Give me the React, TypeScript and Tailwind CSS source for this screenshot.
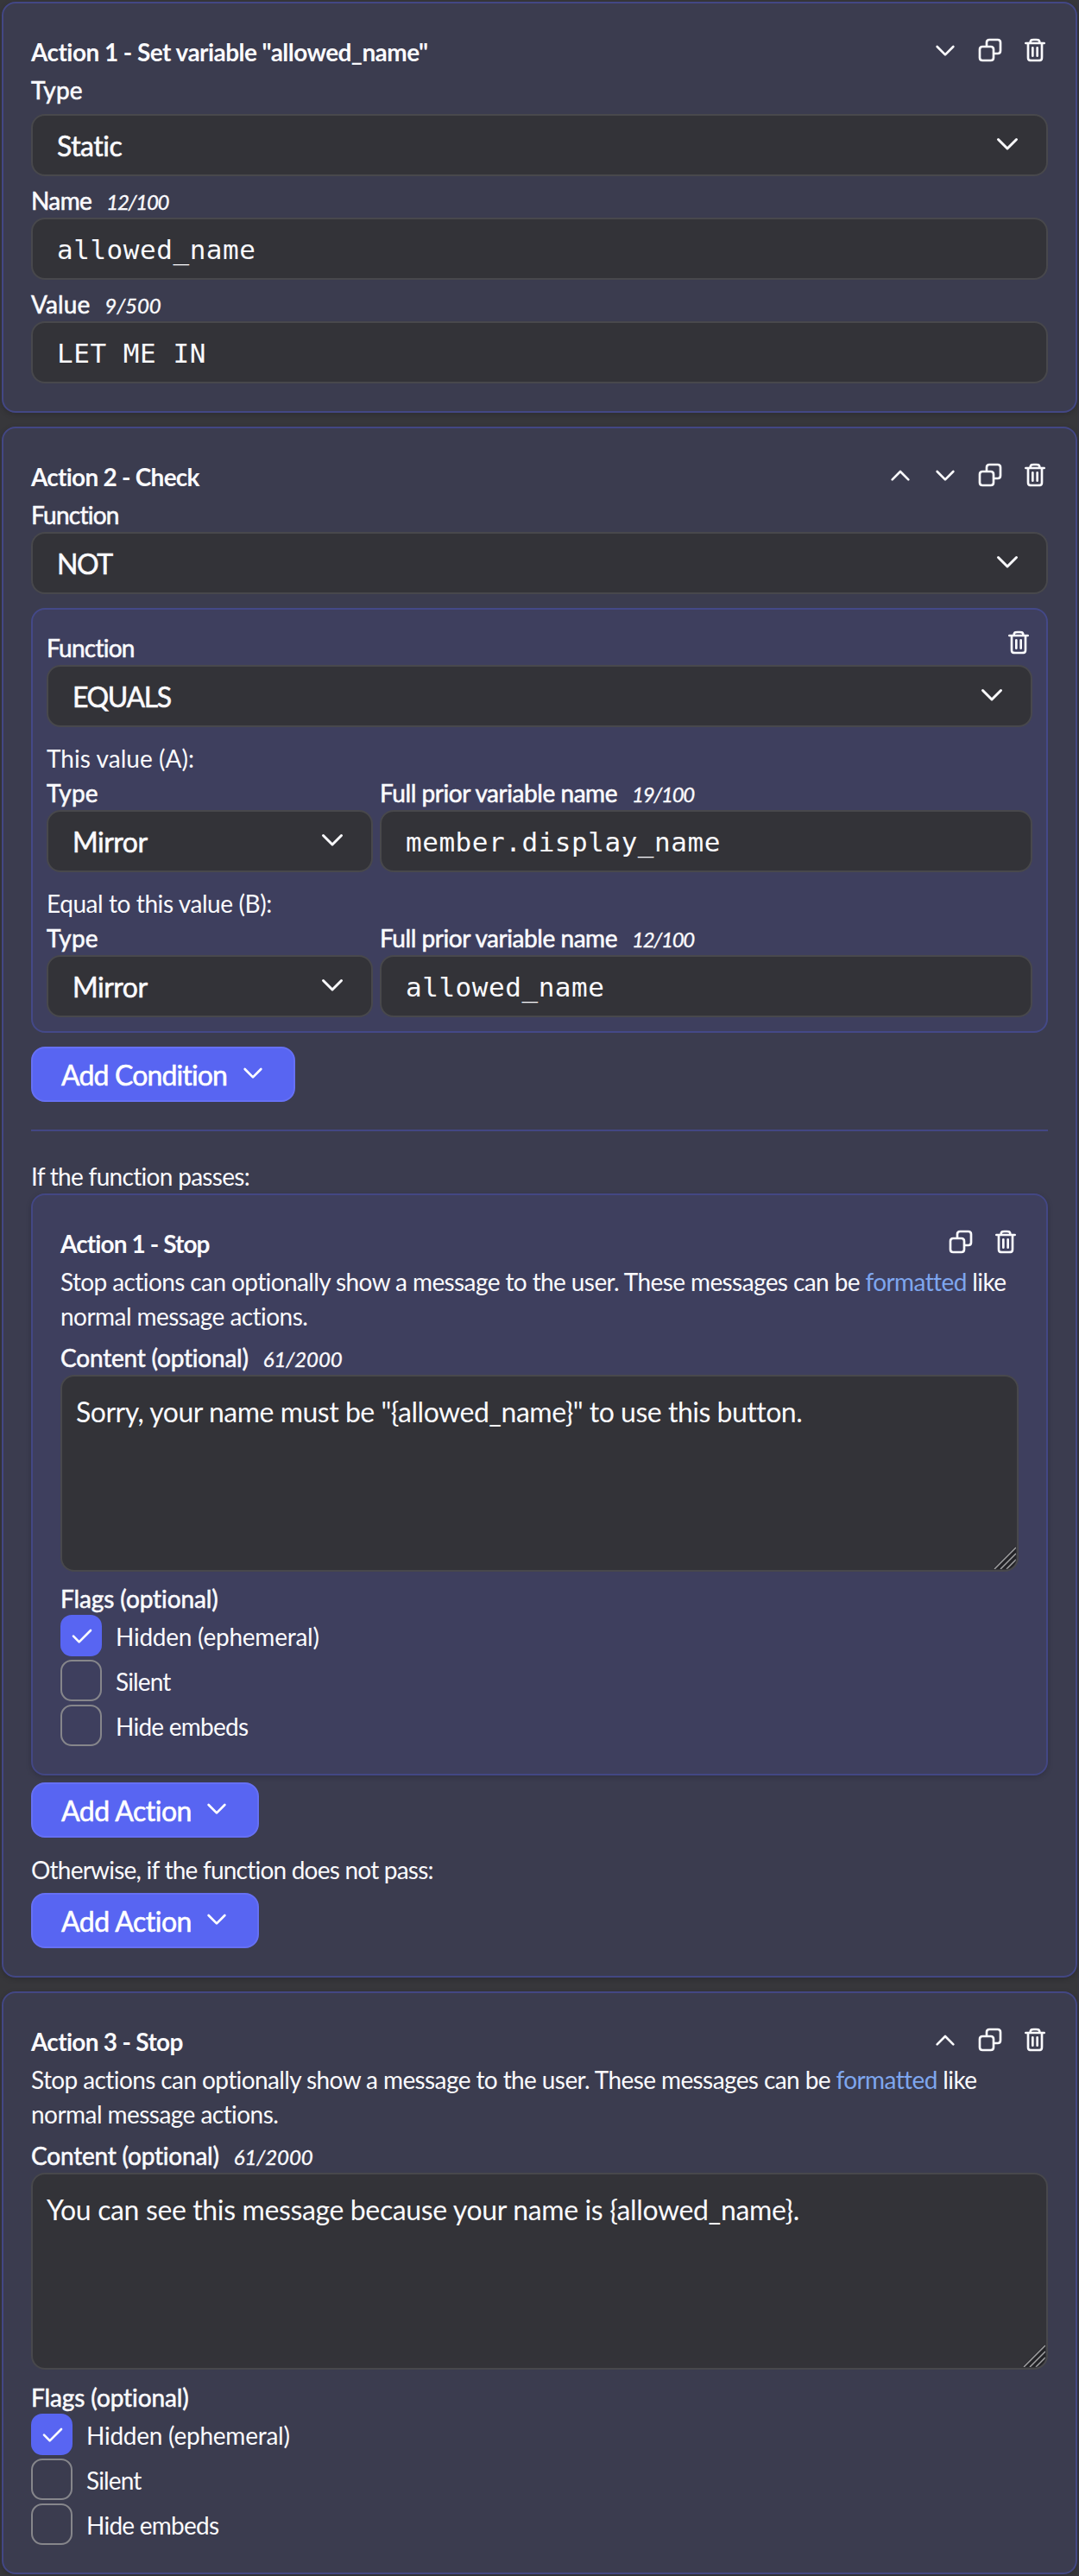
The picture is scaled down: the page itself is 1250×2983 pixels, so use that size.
import React from "react";

type Kids = { children?: React.ReactNode; className?: string };

/* ---------- icons ---------- */

function Icon({ d, className = "size-8" }: { d: string; className?: string }) {
  return (
    <svg
      viewBox="0 0 24 24"
      fill="none"
      stroke="currentColor"
      strokeWidth="2"
      strokeLinecap="round"
      strokeLinejoin="round"
      className={`shrink-0 ${className}`}
    >
      <path d={d} />
    </svg>
  );
}

const DOWN = "M19 9L12 16L5 9";
const UP = "M5 16L12 9L19 16";
const COPY =
  "M9 9V5.4C9 3.8 9.8 3 11.4 3H18.6C20.2 3 21 3.8 21 5.4V12.6C21 14.2 20.2 15 18.6 15H15M3 11.4C3 9.8 3.8 9 5.4 9H12.6C14.2 9 15 9.8 15 11.4V18.6C15 20.2 14.2 21 12.6 21H5.4C3.8 21 3 20.2 3 18.6Z";
const TRASH =
  "M14 10V17M10 10V17M6 6V17.8C6 18.92 6 19.48 6.218 19.907C6.41 20.284 6.715 20.59 7.092 20.782C7.519 21 8.079 21 9.197 21H14.803C15.921 21 16.48 21 16.907 20.782C17.284 20.59 17.59 20.284 17.782 19.907C18 19.48 18 18.921 18 17.803V6M4 6H20M8 6C8 5.068 8 4.602 8.152 4.235C8.355 3.745 8.744 3.355 9.234 3.152C9.602 3 10.068 3 11 3H13C13.932 3 14.398 3 14.765 3.152C15.255 3.355 15.645 3.745 15.848 4.235C16 4.602 16 5.068 16 6";
const CHECK = "M4.5 12.5L9.5 17.5L19.5 7.5";

/* ---------- building blocks ---------- */

// Lato has no medium cut here, so a thin stroke thickens the regular one.
const MEDIUM = "[-webkit-text-stroke:0.55px_currentColor]";

function Card({ children, className = "" }: Kids) {
  return (
    <section
      className={`rounded-2xl border-2 border-[#434784] px-8 pt-[33px] pb-8 shadow-[0_2px_6px_rgba(0,0,0,0.18)] ${className}`}
    >
      {children}
    </section>
  );
}

function Header({ title, icons, className = "" }: { title: string; icons: string[]; className?: string }) {
  return (
    <div className="flex h-11 items-start justify-between">
      <h3 className={`pt-px text-[28px] leading-[44px] font-bold whitespace-nowrap ${className}`}>{title}</h3>
      <div className="-mr-px flex gap-5 pt-[5px]">
        {icons.map((d) => (
          <Icon key={d} d={d} />
        ))}
      </div>
    </div>
  );
}

function Label({
  children,
  count,
  countClass = "tracking-[-1.3px]",
  className = "tracking-[-0.45px]",
  row = "mb-px",
}: Kids & { count?: string; countClass?: string; row?: string }) {
  return (
    <div className={`flex h-10 items-baseline pt-px leading-10 whitespace-nowrap ${row}`}>
      <span className={`text-[28px] ${MEDIUM} ${className}`}>{children}</span>
      {count && (
        <span className={`ml-[17px] text-2xl leading-10 italic [-webkit-text-stroke:0.35px_currentColor] ${countClass}`}>
          {count}
        </span>
      )}
    </div>
  );
}

function Line({ children, className = "" }: Kids) {
  return <p className={`h-10 pt-px text-[28px] leading-10 whitespace-nowrap ${className}`}>{children}</p>;
}

const FIELD = "flex h-18 items-center rounded-2xl border-2 border-[#48484c] bg-[#333338] pl-7";

function Select({ children, className = "" }: Kids) {
  return (
    <div className={`${FIELD} justify-between pr-[27px]`}>
      <span className={`pt-0.5 text-[32px] leading-none ${MEDIUM} ${className}`}>{children}</span>
      <Icon d={DOWN} className="-mt-[5px] size-9" />
    </div>
  );
}

function Input({ children }: Kids) {
  return (
    <div className={FIELD}>
      <span className="pt-[3px] font-['DejaVu_Sans_Mono',monospace] text-[31px] leading-none tracking-[0.54px] whitespace-pre">
        {children}
      </span>
    </div>
  );
}

function TextArea({ children, className = "" }: Kids) {
  return (
    <div className="relative h-[228px] overflow-hidden rounded-2xl border-2 border-[#48484c] bg-[#333338] px-4 pt-4">
      <p className={`text-[32px] leading-[49px] whitespace-nowrap ${className}`}>{children}</p>
      <svg viewBox="0 0 26 26" className="absolute right-px bottom-px size-[26px] rounded-br-xl" fill="none">
        <path d="M0 25L25 0H26V26H0Z" fill="#232327" />
        <path d="M1 26L26 1M8 26L26 8M15 26L26 15M22 26L26 22" stroke="#a2a2a4" strokeWidth="1.5" />
      </svg>
    </div>
  );
}

function Button({ children, className = "" }: Kids) {
  return (
    <button
      className={`flex h-16 items-center justify-between rounded-2xl border-2 border-[#6670f4] bg-[#5865f2] pr-[31px] pl-[33px] text-[32px] leading-none whitespace-nowrap text-white ${className}`}
    >
      <span className={`pt-px ${MEDIUM}`}>{children}</span>
      <Icon d={DOWN} className="-mt-[4px] size-8" />
    </button>
  );
}

function Flag({ children, checked, className = "" }: Kids & { checked?: boolean }) {
  return (
    <div className="flex items-center gap-4">
      <span
        className={`flex size-12 items-center justify-center rounded-[13px] ${
          checked ? "bg-[#5865f2]" : "border-2 border-[#86868b]"
        }`}
      >
        {checked && <Icon d={CHECK} className="ml-px size-8" />}
      </span>
      <span className={`pt-px text-[28px] leading-10 whitespace-nowrap ${className}`}>{children}</span>
    </div>
  );
}

function StopBody({ children, flagsClass }: { children: React.ReactNode; flagsClass: string }) {
  return (
    <>
      <div className="mt-0.5 mb-2 tracking-[-0.6px]">
        <Line>
          Stop actions can optionally show a message to the user. These messages can be{" "}
          <a className="text-[#7ea6ee]">formatted</a> like
        </Line>
        <Line className="tracking-[-0.55px]">normal message actions.</Line>
      </div>
      <Label count="61/2000" countClass="tracking-[-0.1px]" className="tracking-[-0.2px]">
        Content (optional)
      </Label>
      {children}
      <Label className="tracking-[-0.1px]" row={flagsClass}>
        Flags (optional)
      </Label>
      <div className="flex flex-col gap-1">
        <Flag checked className="tracking-[-0.25px]">
          Hidden (ephemeral)
        </Flag>
        <Flag className="tracking-[-0.85px]">Silent</Flag>
        <Flag className="tracking-[-0.75px]">Hide embeds</Flag>
      </div>
    </>
  );
}

function Operand({ count, value }: { count: string; value: string }) {
  return (
    <div className="grid grid-cols-[378px_756px] gap-x-2">
      <div>
        <Label className="tracking-[0.2px]">Type</Label>
        <Select className="tracking-[-0.5px]">Mirror</Select>
      </div>
      <div>
        <Label count={count}>Full prior variable name</Label>
        <Input>{value}</Input>
      </div>
    </div>
  );
}

/* ---------- page ---------- */

export default function App() {
  return (
    <main className="flex min-h-[2983px] w-[1250px] flex-col gap-4 bg-[#37373b] p-0.5 font-['Lato','Open_Sans',sans-serif] text-[#fafafd]">
      <Card className="bg-[#3b3c4f]">
        <Header title={'Action 1 - Set variable "allowed_name"'} icons={[DOWN, COPY, TRASH]} className="tracking-[-0.55px]" />
        <Label className="tracking-[0.2px]" row="mt-0.5 mb-[9px]">
          Type
        </Label>
        <Select className="tracking-[-0.5px]">Static</Select>
        <Label count="12/100" row="mt-[7px] mb-px" className="tracking-[-0.6px]">
          Name
        </Label>
        <Input>allowed_name</Input>
        <Label count="9/500" countClass="tracking-[-0.1px]" row="mt-[7px] mb-px" className="tracking-[0.1px]">
          Value
        </Label>
        <Input>LET ME IN</Input>
      </Card>

      <Card className="bg-[#3b3c4f]">
        <Header title="Action 2 - Check" icons={[UP, DOWN, COPY, TRASH]} className="tracking-[-0.75px]" />
        <Label className="tracking-[-0.75px]" row="mt-0.5 mb-px">
          Function
        </Label>
        <Select className="tracking-[-1.4px]">NOT</Select>

        <div className="mt-4 rounded-2xl border-2 border-[#444988] bg-[#3e3f5e] px-4 pt-[23px] pb-4">
          <div className="flex items-start justify-between">
            <Label className="tracking-[-0.75px]">Function</Label>
            <Icon d={TRASH} className="-mt-px size-8" />
          </div>
          <Select className="tracking-[-1.4px]">EQUALS</Select>
          <Line className="mt-[15px] tracking-[0.05px]">This value (A):</Line>
          <Operand count="19/100" value="member.display_name" />
          <Line className="mt-[15px] tracking-[-0.42px]">Equal to this value (B):</Line>
          <Operand count="12/100" value="allowed_name" />
        </div>

        <Button className="mt-4 w-[306px] tracking-[-0.85px]">Add Condition</Button>
        <hr className="mt-8 mb-[31px] border-t-2 border-[#434784]" />

        <Line className="mb-px tracking-[-0.7px]">If the function passes:</Line>
        <Card className="bg-[#3e3f5e]">
          <Header title="Action 1 - Stop" icons={[COPY, TRASH]} className="tracking-[-0.9px]" />
          <StopBody flagsClass="mt-2.5">
            <TextArea className="tracking-[-0.49px]">{'Sorry, your name must be "{allowed_name}" to use this button.'}</TextArea>
          </StopBody>
        </Card>
        <Button className="mt-2 w-[264px] tracking-[-0.5px]">Add Action</Button>
        <Line className="mt-4 mb-2 tracking-[-0.78px]">Otherwise, if the function does not pass:</Line>
        <Button className="w-[264px] tracking-[-0.5px]">Add Action</Button>
      </Card>

      <Card className="bg-[#3b3c4f]">
        <Header title="Action 3 - Stop" icons={[UP, COPY, TRASH]} className="tracking-[-0.7px]" />
        <StopBody flagsClass="mt-[11px]">
          <TextArea className="tracking-[-0.37px]">{"You can see this message because your name is {allowed_name}."}</TextArea>
        </StopBody>
      </Card>
    </main>
  );
}
